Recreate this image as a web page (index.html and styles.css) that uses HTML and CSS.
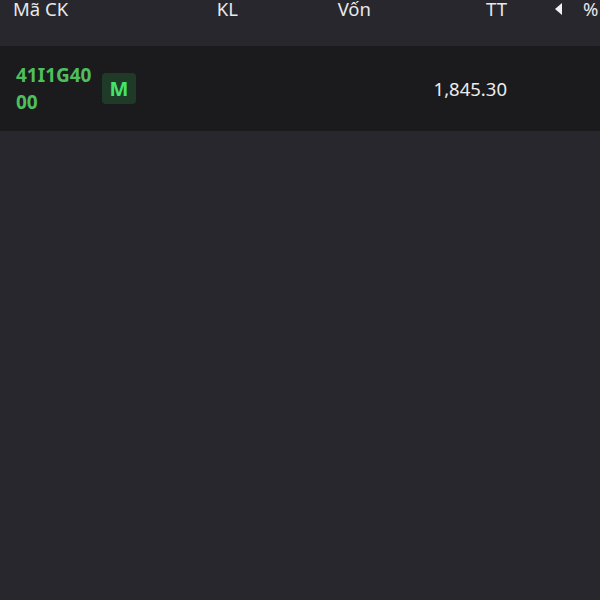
FILE: index.html
```html
<!DOCTYPE html>
<html>
<head>
<meta charset="utf-8">
<link rel="stylesheet" href="styles.css">
</head>
<body>
<div class="table">
  <div class="head">
    <div class="c-code">Mã CK</div>
    <div class="c-kl">KL</div>
    <div class="c-von">Vốn</div>
    <div class="c-tt">TT</div>
    <div class="c-arrow"><span class="tri"></span></div>
    <div class="c-pct">%</div>
  </div>
  <div class="row">
    <div class="c-code code-cell">
      <span class="code">41I1G4000</span>
      <span class="badge">M</span>
    </div>
    <div class="c-kl"></div>
    <div class="c-von"></div>
    <div class="c-tt value">1,845.30</div>
  </div>
</div>
</body>
</html>
```
FILE: styles.css
```css
html, body {
  margin: 0;
  padding: 0;
  background: #28272d;
  width: 600px;
  height: 600px;
  overflow: hidden;
  font-family: "Noto Sans", "Open Sans", sans-serif;
  color: #e8e8ea;
}
.table {
  width: 600px;
}
.head {
  display: flex;
  height: 46px;
  font-size: 18.5px;
  line-height: 18px;
  white-space: nowrap;
}
.c-code {
  width: 140px;
  padding-left: 13px;
  box-sizing: border-box;
}
.c-kl {
  width: 98px;
  text-align: right;
}
.c-von {
  width: 133px;
  text-align: right;
}
.c-tt {
  width: 136px;
  text-align: right;
}
.c-arrow {
  width: 55px;
  display: flex;
  justify-content: flex-end;
  padding-top: 3px;
  box-sizing: border-box;
}
.tri {
  width: 0;
  height: 0;
  border-top: 6px solid transparent;
  border-bottom: 6px solid transparent;
  border-right: 7px solid #f2f2f2;
}
.c-pct {
  padding-left: 21px;
}
.row {
  display: flex;
  align-items: center;
  height: 85px;
  background: #1b1b1e;
}
.code-cell {
  display: flex;
  align-items: center;
  padding-left: 16px;
  gap: 8px;
}
.code {
  width: 78px;
  word-break: break-all;
  font-weight: 700;
  font-size: 19px;
  line-height: 27px;
  color: #4fbf5e;
  margin-top: 1px;
}
.badge {
  width: 34px;
  height: 31px;
  border-radius: 4px;
  background: #1f3b27;
  color: #44e46c;
  font-weight: 700;
  font-size: 20px;
  display: flex;
  align-items: center;
  justify-content: center;
}
.value {
  font-size: 18.5px;
  color: #ececee;
}
```
